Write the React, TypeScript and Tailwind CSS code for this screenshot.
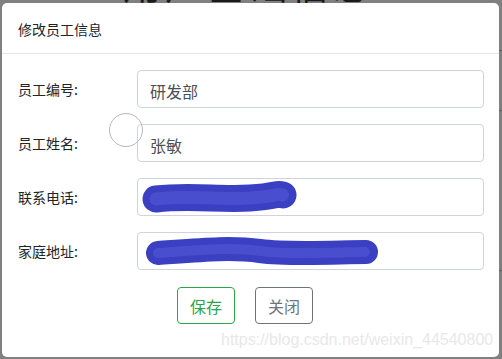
import React from "react";

const cjk = { fontFamily: '"Noto Sans CJK SC", "Noto Sans", sans-serif' };

function Scribble({ d, w }: { d: string; w: number }) {
  return (
    <svg className="absolute left-0 top-0 pointer-events-none" width="502" height="359" viewBox="0 0 502 359">
      <path d={d} stroke="#3b3fc2" strokeWidth={w} strokeLinecap="round" strokeLinejoin="round" fill="none" />
      <path d={d} stroke="#5358d6" strokeWidth={w - 14} strokeLinecap="round" fill="none" strokeDasharray="2 3" opacity="0.6" />
    </svg>
  );
}

function Row({ label, children }: { label: string; children?: React.ReactNode }) {
  return (
    <div className="flex items-center">
      <div className="w-[119px] text-[14px] text-[#212529] leading-none">{label}</div>
      <div className="flex-1 h-[38px] rounded-[4px] border border-[#ced4da] flex items-center pl-[12px] pt-[3px] text-[16px] text-[#495057]">
        {children}
      </div>
    </div>
  );
}

export default function App() {
  return (
    <div className="relative w-[502px] h-[359px] overflow-hidden bg-[#808080]" style={cjk}>
      <div className="flex justify-center -mt-[39px] pr-[4px]">
        <div className="text-[38px] leading-[44px] text-[#1a1a1a] tracking-[4px]">用户基础信息</div>
      </div>
      <div className="absolute right-0 top-[50px] w-[3px] h-px bg-[#606060]" />
      <div className="absolute right-0 top-[110px] w-[3px] h-px bg-[#606060]" />
      <div className="absolute right-0 top-[270px] w-[3px] h-px bg-[#606060]" />

      <div className="absolute left-[2px] top-[3px] w-[497px] h-[354px] bg-white rounded-[5px] flex flex-col">
        <div className="h-[51px] border-b border-[#e4e6e9] flex items-center px-[16px] pt-[3px] text-[14px] text-[#212529]">
          修改员工信息
        </div>
        <div className="flex flex-col gap-[16px] pt-[16px] pl-[16px] pr-[15px]">
          <Row label="员工编号:">研发部</Row>
          <Row label="员工姓名:">张敏</Row>
          <Row label="联系电话:" />
          <Row label="家庭地址:" />
        </div>
        <div className="flex gap-[20px] pl-[175px] pt-[17px]">
          <button className="w-[58px] h-[37px] rounded-[4px] border border-[#28a745] text-[#2fa34a] text-[16px]">保存</button>
          <button className="w-[58px] h-[37px] rounded-[4px] border border-[#6c757d] text-[#6c757d] text-[16px]">关闭</button>
        </div>
      </div>

      <Scribble d="M156 199 C 190 195, 220 200, 250 198 S 275 193, 283 195" w={27} />
      <Scribble d="M158 253 C 200 250, 230 247, 260 251 S 340 252, 366 252" w={24} />

      <div
        className="absolute left-[221px] top-[330px] text-[16px] leading-[20px] text-[#e8e8e8] whitespace-nowrap"
        style={{ fontFamily: '"Liberation Sans", Arial, sans-serif' }}
      >
        https://blog.csdn.net/weixin_44540800
      </div>
      <div className="absolute left-[109px] top-[113px] w-[34px] h-[34px] rounded-full border border-[#b5b5c8]" />
    </div>
  );
}
